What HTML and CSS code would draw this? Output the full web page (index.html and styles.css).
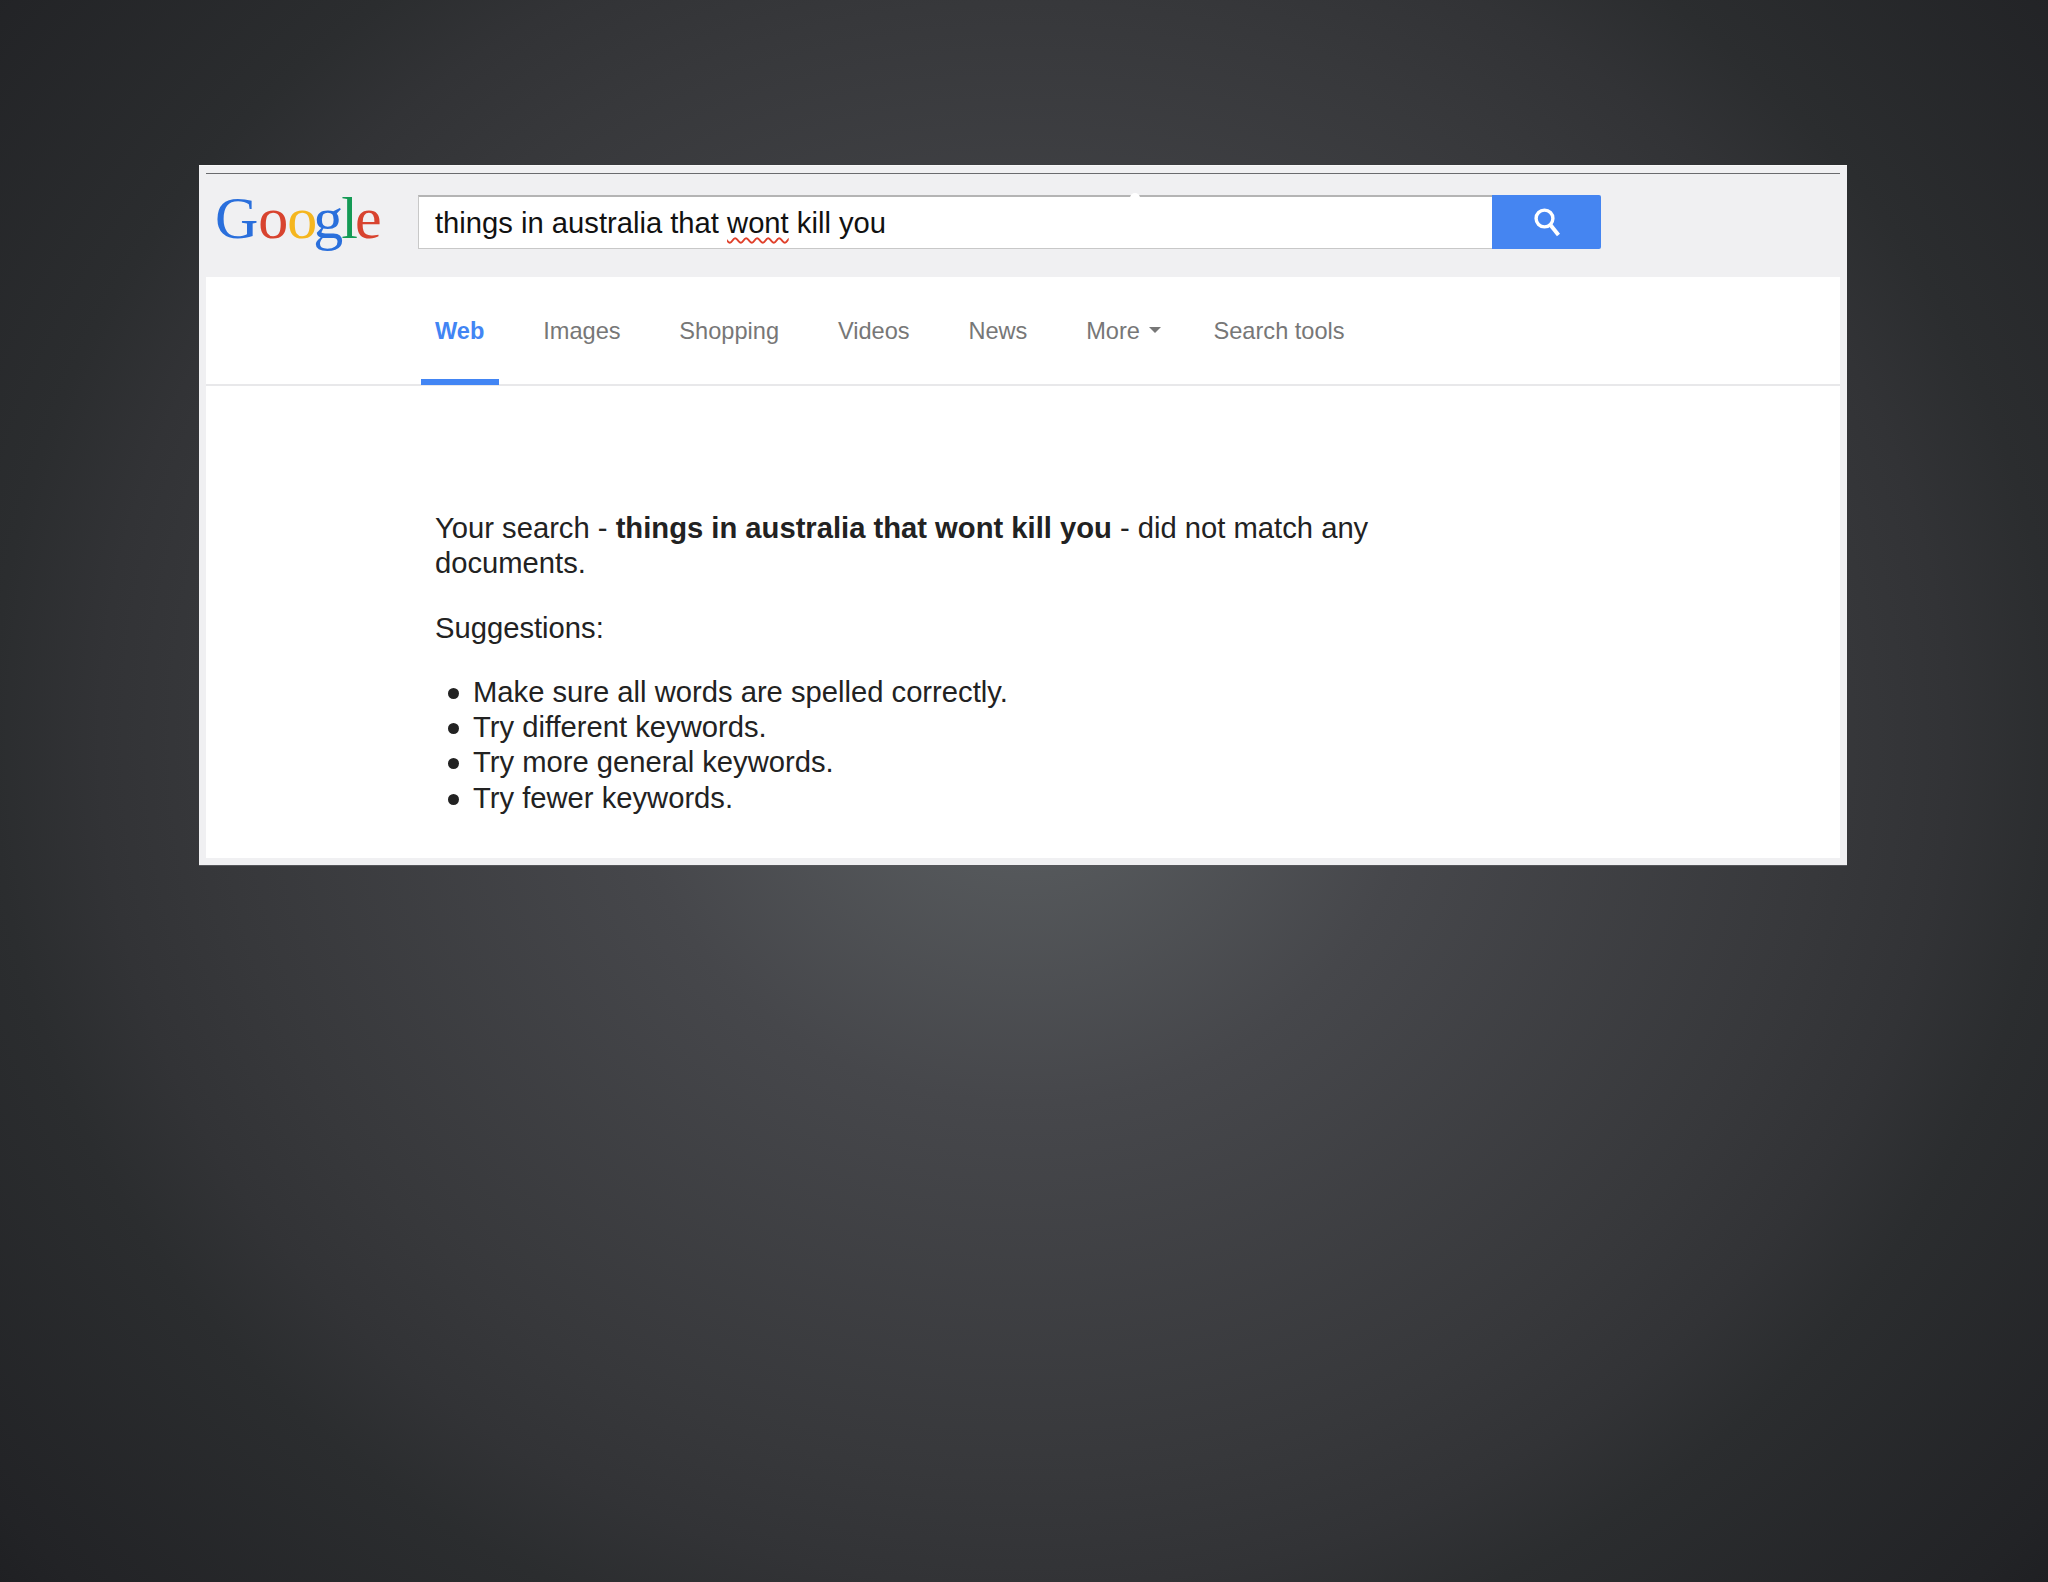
FILE: index.html
```html
<!DOCTYPE html>
<html lang="en">
<head>
  <meta charset="UTF-8">
  <title>things in australia that wont kill you - Google Search</title>
  <link rel="stylesheet" href="styles.css">
</head>
<body>

  <div class="slide">
    <div class="shot">

      <div class="top-bar">
        <div class="logo"><span class="blue">G</span><span class="red">o</span><span class="yellow">o</span><span class="blue">g</span><span class="green">l</span><span class="red">e</span></div>
        <div class="search-box">
          <div class="search-text">things in australia that <span class="misspelt">wont</span> kill you</div>
          <span class="nub"></span>
        </div>
        <div class="search-btn">
          <svg width="26" height="32" viewBox="0 0 26 32">
            <circle cx="10.5" cy="12.5" r="8.4" fill="none" stroke="#fff" stroke-width="3.4"/>
            <path d="M16.5 19 L24.5 29" stroke="#fff" stroke-width="4" fill="none"/>
          </svg>
        </div>
      </div>

      <div class="tabs">
        <div class="tab active">Web</div>
        <div class="tab">Images</div>
        <div class="tab">Shopping</div>
        <div class="tab">Videos</div>
        <div class="tab">News</div>
        <div class="tab more">More <span class="caret"></span></div>
        <div class="tab tools">Search tools</div>
      </div>

      <div class="results">
        <p class="msg">Your search - <b>things in australia that wont kill you</b> - did not match any documents.</p>
        <p class="sugg">Suggestions:</p>
        <ul>
          <li>Make sure all words are spelled correctly.</li>
          <li>Try different keywords.</li>
          <li>Try more general keywords.</li>
          <li>Try fewer keywords.</li>
        </ul>
      </div>

    </div>
  </div>

</body>
</html>
```

FILE: styles.css
```css
html, body {
  margin: 0;
  height: 100%;
}

body {
  font-family: "Liberation Sans", Arial, sans-serif;
  background: radial-gradient(ellipse 1200px 1100px at 1024px 740px, #5a5d60 0%, #55585b 11%, #46474b 33%, #37383b 67%, #323336 77%, #2b2d2f 86%, #222326 110%, #1f2023 115%);
  background-color: #1f2023;
  overflow: hidden;
}

.slide {
  padding: 165px 0 0 199px;
}

.shot {
  width: 1648px;
  height: 701px;
  box-sizing: border-box;
  background-color: #f0f0f2;
  padding: 7px 7px 7px 7px;
  border-top: 1px solid #f8f8f8;
  border-bottom: 1px solid #55565a;
  display: flex;
  flex-direction: column;
}

.top-bar {
  height: 104px;
  box-sizing: border-box;
  border-top: 1px solid #6a6b6e;
  display: flex;
  align-items: flex-start;
  padding-top: 21px;
}

.logo {
  width: 212px;
  height: 70px;
  font-family: "Liberation Serif", serif;
  font-size: 60px;
  line-height: 60px;
  padding-left: 9px;
  box-sizing: border-box;
  margin-top: -7px;
}

.logo span:nth-child(2) { letter-spacing: -1px; }
.logo span:nth-child(3) { letter-spacing: -4px; }
.logo span:nth-child(4) { letter-spacing: -2px; }
.logo span:nth-child(5) { letter-spacing: -3px; }

.blue { color: #2a6fdc; }
.red { color: #d8432f; }
.yellow { color: #f5b61f; }
.green { color: #149a55; }

.search-box {
  position: relative;
  width: 1074px;
  height: 54px;
  box-sizing: border-box;
  background-color: #fff;
  border: 1px solid #c8c8c8;
  border-top: 2px solid #b4b4b4;
  border-right: 0;
  padding-left: 16px;
}

.search-text {
  font-size: 29.2px;
  line-height: 52px;
  color: #111;
}

.misspelt {
  text-decoration: underline wavy #e0402a 1.5px;
  text-underline-offset: 4px;
}

.nub {
  position: absolute;
  left: 711px;
  top: -4px;
  width: 10px;
  height: 5px;
  background-color: #fff;
  border-radius: 5px 5px 0 0;
}

.search-btn {
  width: 109px;
  height: 54px;
  background-color: #4585f1;
  border-radius: 0 2px 2px 0;
  display: flex;
  align-items: center;
  justify-content: center;
}

.tabs {
  height: 109px;
  box-sizing: border-box;
  background-color: #fff;
  border-bottom: 2px solid #e8e8ea;
  display: flex;
  padding-left: 215px;
}

.tab {
  font-size: 23.6px;
  line-height: 108px;
  color: #777;
  padding: 0 14px;
  margin-right: 30.8px;
}

.tab.active {
  color: #4285f4;
  font-weight: bold;
  border-bottom: 6px solid #4285f4;
  height: 102px;
  padding-right: 15px;
  margin-right: 29.8px;
}

.tab.more {
  margin-right: 25px;
}

.caret {
  display: inline-block;
  vertical-align: middle;
  margin: -6px 0 0 2px;
  border-top: 6px solid #777;
  border-left: 6px solid transparent;
  border-right: 6px solid transparent;
}

.results {
  flex: 1;
  background-color: #fff;
  padding: 125px 0 0 229px;
  color: #222;
  font-size: 29.2px;
  line-height: 35px;
}

.msg {
  width: 960px;
  margin: 0 0 30px;
}

.sugg {
  margin: 0 0 29px;
}

.results ul {
  margin: 0;
  padding: 0 0 0 38px;
  list-style: none;
}

.results li:last-child {
  margin-top: 1px;
}

.results li::before {
  content: "";
  display: inline-block;
  width: 11px;
  height: 11px;
  margin: 0 14px 3px -25px;
  border-radius: 50%;
  background-color: #222;
}
```
